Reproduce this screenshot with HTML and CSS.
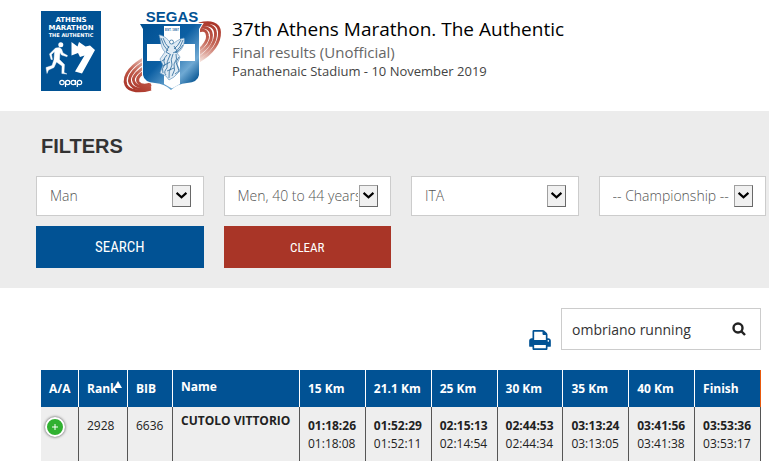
FILE: index.html
```html
<!DOCTYPE html>
<html lang="en">
<head>
<meta charset="utf-8">
<meta name="viewport" content="width=device-width, initial-scale=1">
<title>37th Athens Marathon. The Authentic</title>
<link rel="stylesheet" href="styles.css">
</head>
<body>
<header class="masthead">
  <svg class="logo-marathon" viewBox="0 0 60 80" role="img" aria-label="Athens Marathon The Authentic">
    <rect width="60" height="80" fill="#015294"/>
    <g fill="#fff" font-family="DejaVu Sans, sans-serif" font-weight="700" text-anchor="middle">
      <text x="30" y="11" font-size="7">ATHENS</text>
      <text x="30" y="19" font-size="7">MARATHON</text>
      <text x="30" y="26" font-size="5">THE AUTHENTIC</text>
    </g>
    <circle cx="19.800" cy="33.800" r="2.500" fill="#fff"/>
    <path d="M14.500 37L18.500 36.500L20.500 38L22 42L26.500 44.500L26 45.800L20.500 44L19 41.500L18.500 48.500L23.500 53.500L23 61.500L26 63L20.800 62.500L21 55L15.500 51L13 56.500L7.500 59L6 62.500L5 56.500L11 54.500L13 48.500L13.500 40.500L10.500 43.500L11.500 48.500L10 48.500L8.500 43Z" fill="#fff" stroke="#fff" stroke-width=".4" stroke-linejoin="round"/>
    <path d="M30.500 31L36.500 35.500L38 31L44.500 35.500L49 34.500L54 39L41 62.500L34 60.500L43.500 44.500L39 46L37 42L30.500 44.500Z" fill="#fff"/>
    <g fill="none" stroke="#fff" stroke-width="1.200">
      <circle cx="21" cy="71.500" r="2.200"/><circle cx="26.700" cy="71.500" r="2.200"/><path d="M24.500 71V76"/>
      <circle cx="32.300" cy="71.500" r="2.200"/><path d="M34.500 69V74"/><circle cx="38.500" cy="71.500" r="2.200"/><path d="M36.300 71V76"/>
    </g>
  </svg>
  <svg class="logo-segas" viewBox="0 0 100 84" role="img" aria-label="SEGAS">
    <defs>
      <linearGradient id="shield" x1="0" y1="0" x2="1" y2="1">
        <stop offset="0" stop-color="#004f91"/><stop offset=".45" stop-color="#0c5fa3"/>
        <stop offset=".72" stop-color="#6fa9d3"/><stop offset=".9" stop-color="#00508f"/>
      </linearGradient>
      <linearGradient id="ring-left" gradientUnits="userSpaceOnUse" x1="6" y1="80" x2="24" y2="46">
        <stop offset="0" stop-color="#a83226"/><stop offset=".5" stop-color="#c05a4a"/><stop offset="1" stop-color="#f0d2ca"/>
      </linearGradient>
      <linearGradient id="ring-right" gradientUnits="userSpaceOnUse" x1="93" y1="12" x2="78" y2="50">
        <stop offset="0" stop-color="#a83226"/><stop offset=".5" stop-color="#c46556"/><stop offset="1" stop-color="#f4ded8"/>
      </linearGradient>
    </defs>
    <g fill="none" stroke="url(#ring-left)" stroke-width="2.900">
      <path d="M24 46C10 53-1 64 3 74C6 81 18 81 28 78"/>
      <path d="M24 50C14 55 4 65 7 72C10 79 18 79 28 76"/>
      <path d="M24 55C17 58 8 66 11 71C13 76 20 77 28 74"/>
      <path d="M24 60C18 62 13 67 15 71C17 74 22 75 28 73"/>
    </g>
    <g fill="none" stroke="url(#ring-right)" stroke-width="2.900">
      <path d="M76 13C87 10 96 12 96.500 21C97 31 90 42 76 50"/>
      <path d="M76 15C85 12 92 15 92.500 22C93 30 87 40 76 47"/>
      <path d="M76 17C83 15 88 18 88.500 24C89 30 84 37 76 43"/>
      <path d="M76 20C81 18 84 20 84.500 25C85 29 81 35 76 39"/>
    </g>
    <path d="M17 13H79L76 18V64Q75 71 64 72Q54 73 48 79Q42 73 32 72Q21 71 20 64V18Z" fill="#fff" stroke="#fff" stroke-width="2"/>
    <path d="M17 13H79L76 18V64Q75 71 64 72Q54 73 48 79Q42 73 32 72Q21 71 20 64V18Z" fill="url(#shield)"/>
    <path d="M41 15H57V33H72V50H57V73L49 77.500L41 73V50H24V33H41Z" fill="#fff"/>
    <text x="49" y="20" text-anchor="middle" font-family="Liberation Sans, sans-serif" font-size="3" font-weight="700" fill="#296ba2">EST. 1897</text>
    <text x="49" y="11" text-anchor="middle" font-family="Liberation Sans, sans-serif" font-size="15" font-weight="700" fill="#015294">SEGAS</text>
    <path d="M47 31C42 25 38 24 36 24C38 28 37 36 42 41L37 48L40 54L37 62L43 65L46 69L51 66L57 60L54 53L57 46L54 42C61 38 62 30 61 27C56 28 52 31 50 33Z" fill="#e0ebf4" stroke="#6c9ac0" stroke-width=".7"/>
    <circle cx="48.500" cy="31" r="2" fill="#fff" stroke="#206397" stroke-width=".7"/>
    <path d="M38 27Q40 35 45 40M40 27Q42 33 46 37M60 29Q58 36 52 42M58 29Q55 35 51 38M60 34Q57 39 53 42M46 35L43 41L48 44M51 35L54 40L50 42M44 44Q39 49 42 53Q38 58 40 62M47 44Q43 51 44 57Q40 61 43 64M50 43Q47 49 49 54Q45 61 46 67M53 43Q55 48 51 53Q53 59 49 65M56 46L53 51L56 60L52 63M39 50L42 48M40 55L47 51M44 60L51 57" fill="none" stroke="#2a6a9c" stroke-width=".8"/>
  </svg>
  <div class="event">
    <h1>37th Athens Marathon. The Authentic</h1>
    <p class="status">Final results (Unofficial)</p>
    <p class="venue">Panathenaic Stadium - 10 November 2019</p>
  </div>
</header>

<form class="filters">
  <h2>FILTERS</h2>
  <div class="filter-grid">
    <div class="picker"><select aria-label="Gender"><option>Man</option></select><svg class="arrow" viewBox="0 0 19 22" aria-hidden="true"><path d="M4 7.500L9.500 12.500L15 7.500"/></svg></div>
    <div class="picker"><select aria-label="Age category"><option>Men, 40 to 44 years</option></select><svg class="arrow" viewBox="0 0 19 22" aria-hidden="true"><path d="M4 7.500L9.500 12.500L15 7.500"/></svg></div>
    <div class="picker"><select aria-label="Country"><option>ITA</option></select><svg class="arrow" viewBox="0 0 19 22" aria-hidden="true"><path d="M4 7.500L9.500 12.500L15 7.500"/></svg></div>
    <div class="picker"><select aria-label="Championship"><option>-- Championship --</option></select><svg class="arrow" viewBox="0 0 19 22" aria-hidden="true"><path d="M4 7.500L9.500 12.500L15 7.500"/></svg></div>
    <button class="action search" type="submit">SEARCH</button>
    <button class="action clear" type="reset">CLEAR</button>
  </div>
</form>

<main class="results">
  <div class="toolbar">
    <button class="print" type="button" aria-label="Print">
      <svg viewBox="0 0 1664 1536" aria-hidden="true"><path fill="#015294" d="M384 1408h896v-256H384v256zm0-640h896V384h-160q-40 0-68-28t-28-68V128H384v640zm1152 64q0-26-19-45t-45-19-45 19-19 45 19 45 45 19 45-19 19-45zm128 0v416q0 13-9.500 22.500t-22.500 9.500h-224v160q0 40-28 68t-68 28H352q-40 0-68-28t-28-68v-160H32q-13 0-22.500-9.500T0 1248V832q0-79 56.500-135.500T192 640h64V96q0-40 28-68t68-28h672q40 0 88 20t76 48l152 152q28 28 48 76t20 88v256h64q79 0 135.500 56.500T1664 832z"/></svg>
    </button>
    <div class="lookup">
      <input type="text" value="ombriano running" aria-label="Search results">
      <button type="button" aria-label="Search"><svg viewBox="0 0 14 14" aria-hidden="true"><circle cx="6" cy="6" r="4.500"/><path d="M9.200 9.200L13 13"/></svg></button>
    </div>
  </div>
  <table>
    <colgroup>
      <col class="c-aa"><col class="c-rank"><col class="c-bib"><col class="c-name"><col span="7">
    </colgroup>
    <thead>
      <tr><th>A/A</th><th class="sorted">Rank<svg class="sort" viewBox="0 0 8 7" aria-hidden="true"><path d="M4 0L8 7H0Z"/></svg></th><th>BIB</th><th class="name">Name</th><th>15 Km</th><th>21.1 Km</th><th>25 Km</th><th>30 Km</th><th>35 Km</th><th>40 Km</th><th>Finish</th></tr>
    </thead>
    <tbody>
      <tr>
        <td class="toggle"><button class="expand" type="button" aria-label="Show details"><svg viewBox="0 0 16 16" aria-hidden="true"><path d="M8 5V11M5 8H11"/></svg></button></td>
        <td>2928</td><td>6636</td><td class="name"><b>CUTOLO VITTORIO</b></td>
        <td><b>01:18:26</b><br>01:18:08</td>
        <td><b>01:52:29</b><br>01:52:11</td>
        <td><b>02:15:13</b><br>02:14:54</td>
        <td><b>02:44:53</b><br>02:44:34</td>
        <td><b>03:13:24</b><br>03:13:05</td>
        <td><b>03:41:56</b><br>03:41:38</td>
        <td><b>03:53:36</b><br>03:53:17</td>
      </tr>
    </tbody>
  </table>
</main>
</body>
</html>
```
FILE: styles.css
```css
* {
  box-sizing: border-box;
}

body {
  margin: 0;
  background: #fff;
  color: #222;
  font-family: "Open Sans", sans-serif;
  font-size: 12px;
}

h1, h2, p {
  margin: 0;
  font-weight: 400;
}

button, input, select {
  font-family: inherit;
  border-radius: 0;
}

button {
  padding: 0;
  border: 0;
  background: none;
  cursor: pointer;
}

svg {
  display: block;
}

.masthead {
  display: flex;
  align-items: flex-start;
  min-height: 111px;
  padding: 11px 40px 0 41px;
}

.logo-marathon {
  flex: none;
  width: 60px;
  height: 80px;
}

.logo-segas {
  flex: none;
  width: 100px;
  height: 84px;
  margin: 0 9px 0 22px;
  overflow: visible;
}

.event {
  padding-top: 5px;
}

.event h1 {
  color: #000;
  font-size: 19px;
  line-height: 26px;
}

.status {
  color: #666;
  font-size: 15px;
  line-height: 20px;
}

.venue {
  color: #444;
  font-size: 13px;
  line-height: 18px;
}

.filters {
  padding: 24px 3px 20px 36px;
  background: #ececec;
}

.filters h2 {
  padding-left: 5px;
  color: #333;
  font: bold 20px/22px "Liberation Sans", sans-serif;
}

.filter-grid {
  display: grid;
  grid-template-columns: repeat(4, minmax(0, 1fr));
  gap: 10px 20px;
  margin-top: 19px;
}

.picker {
  position: relative;
}

.picker select {
  display: block;
  width: 100%;
  height: 40px;
  padding: 0 32px 2px 13px;
  border: 1px solid #ccc;
  background: #fff;
  color: #555;
  font-size: 14px;
  font-weight: 300;
  appearance: none;
}

.arrow {
  position: absolute;
  top: 9px;
  right: 13px;
  width: 19px;
  height: 22px;
  border: 1px solid #696969;
  border-top-color: #a0a0a0;
  border-left-color: #a0a0a0;
  background: #f0f0f0;
  pointer-events: none;
}

.arrow path {
  fill: none;
  stroke: #000;
  stroke-width: 2.4;
}

.action {
  height: 42px;
  color: #fff;
  font-family: "Roboto Condensed", Roboto, sans-serif;
}

.search {
  background: #015294;
  font-size: 15px;
}

.clear {
  background: #a93527;
  font-size: 13px;
}

.results {
  padding: 20px 8px 8px 41px;
}

.toolbar {
  display: flex;
  justify-content: flex-end;
  align-items: flex-end;
  gap: 10px;
  margin-bottom: 20px;
}

.print svg {
  width: 22px;
  height: 20px;
}

.lookup {
  display: flex;
  align-items: center;
  width: 200px;
  height: 42px;
  padding: 0 14px 0 10px;
  border: 1px solid #ccc;
}

.lookup input {
  flex: 1;
  min-width: 0;
  padding: 0;
  border: 0;
  outline: 0;
  background: none;
  color: #333;
  font-size: 14px;
}

.lookup svg {
  width: 14px;
  height: 14px;
  fill: none;
  stroke: #222;
  stroke-width: 2.4;
}

table {
  width: 100%;
  border-collapse: separate;
  border-spacing: 0;
  table-layout: fixed;
}

.c-aa {
  width: 38px;
}

.c-rank {
  width: 49px;
}

.c-bib {
  width: 45px;
}

.c-name {
  width: 127px;
}

th, td {
  padding: 0 0 0 8px;
  text-align: left;
  white-space: nowrap;
}

th {
  height: 37px;
  border-right: 1px solid #fff;
  background: #015294;
  color: #fff;
  font-size: 12px;
  font-weight: 700;
  line-height: 18px;
}

th:last-child {
  border-right-color: #e8590c;
}

th.name {
  padding-bottom: 4px;
}

.sorted {
  position: relative;
}

.sort {
  position: absolute;
  top: 11px;
  right: 5px;
  width: 8px;
  height: 7px;
  fill: #fff;
}

td {
  height: 54px;
  padding-top: 10px;
  border-right: 1px solid #555;
  background: #eee;
  font-size: 12px;
  line-height: 18px;
  vertical-align: top;
}

td.name {
  padding-top: 5px;
}

td.toggle {
  padding-left: 4px;
}

.expand {
  width: 20px;
  height: 20px;
  border: 2px solid #fff;
  border-radius: 50%;
  background: #31b131;
  box-shadow: 0 0 3px #444;
}

.expand svg {
  width: 16px;
  height: 16px;
  fill: none;
  stroke: #fff;
  stroke-width: 1;
}
```
